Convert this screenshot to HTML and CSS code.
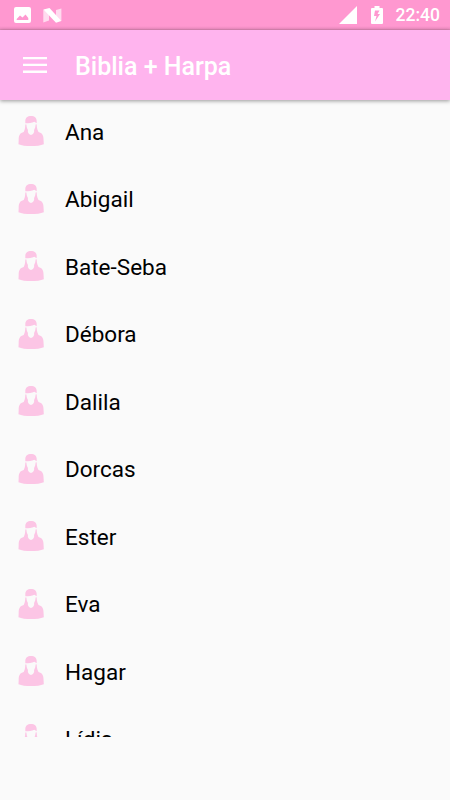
FILE: index.html
```html
<!DOCTYPE html>
<html lang="pt">
  <head>
    <meta charset="utf-8">
    <title>Biblia + Harpa</title>
    <link rel="stylesheet" href="styles.css">
  </head>
  <body>
    <svg class="defs">
      <symbol id="woman" viewBox="0 0 26 30">
        <path d="M7.300 9V5.200C7.300 1.800 9.500 0 13 0s5.700 1.800 5.700 5.200V9c0 3 .9 5.200 1.800 7 3.600.8 5 3.400 5 7l.3 5.200c-3 1.300-7.800 1.800-12.800 1.800S3.500 29.500.5 28.200L.7 23c0-3.600 1.400-6.200 5-7 .9-1.800 1.600-4 1.600-7z"/>
        <path class="face" d="M7 7.300c3.800 0 7-.3 9.300-1.500.6.700 1.500 1.100 2.700 1.400v1.100l-1.400.3c-.1 2.500-.7 4.100-1.500 5.300v2c-.5 1.400-1.500 2.600-3.100 3.100-1.600-.5-2.600-1.700-3.100-3.100v-2C9.100 12.700 8.500 11.100 8.400 8.600L7 8.400z"/>
      </symbol>
    </svg>
    <div class="status-bar">
      <svg class="status-icon" width="17" height="17" viewBox="0 0 17 17">
        <path fill="#fff" fill-rule="evenodd" d="M2 0h13a2 2 0 0 1 2 2v12a2 2 0 0 1-2 2H2a2 2 0 0 1-2-2V2a2 2 0 0 1 2-2zM2.700 13h11.600V11L11.500 7.500 8.500 10.500 6 8.500 2.700 12z"/>
      </svg>
      <svg class="status-icon nougat" width="19" height="15" viewBox="0 0 19 15">
        <path fill="#fff" fill-opacity=".65" d="M.3 1.500L6 4v8.500L.3 14.500zM18.400.5v12.500L13 10.500V2z"/>
        <path fill="#fff" d="M.5 1.500L6.500 0 18.300 13l-5.300 1.700z"/>
      </svg>
      <svg class="signal" width="18" height="18" viewBox="0 0 18 18">
        <path fill="#fff" d="M18 0v18H0z"/>
      </svg>
      <svg class="battery" width="12" height="18" viewBox="0 0 12 18">
        <path fill="#fff" fill-rule="evenodd" d="M3.500 0h5v2H11a1 1 0 0 1 1 1v14a1 1 0 0 1-1 1H1a1 1 0 0 1-1-1V3a1 1 0 0 1 1-1h2.500zM4 4.500L3 10h2.500L4 15.500 9 8H6.500L8.500 4.500z"/>
      </svg>
      <span class="clock">22:40</span>
    </div>
    <div class="toolbar">
      <svg class="menu-button" width="24" height="17" viewBox="0 0 24 17">
        <path fill="#fff" d="M0 0h24v2.300H0zM0 6.800h24v2.300H0zM0 13.600h24v2.300H0z"/>
      </svg>
      <h1>Biblia + Harpa</h1>
    </div>
    <div class="list">
      <div class="item"><svg class="avatar"><use href="#woman"/></svg>Ana</div>
      <div class="item"><svg class="avatar"><use href="#woman"/></svg>Abigail</div>
      <div class="item"><svg class="avatar"><use href="#woman"/></svg>Bate-Seba</div>
      <div class="item"><svg class="avatar"><use href="#woman"/></svg>Débora</div>
      <div class="item"><svg class="avatar"><use href="#woman"/></svg>Dalila</div>
      <div class="item"><svg class="avatar"><use href="#woman"/></svg>Dorcas</div>
      <div class="item"><svg class="avatar"><use href="#woman"/></svg>Ester</div>
      <div class="item"><svg class="avatar"><use href="#woman"/></svg>Eva</div>
      <div class="item"><svg class="avatar"><use href="#woman"/></svg>Hagar</div>
      <div class="item"><svg class="avatar"><use href="#woman"/></svg>Lídia</div>
    </div>
  </body>
</html>
```
FILE: styles.css
```css
body {
  margin: 0;
  height: 800px;
  overflow: hidden;
  display: flex;
  flex-direction: column;
  background: #fafafa;
  font-family: Roboto, "Liberation Sans", sans-serif;
}
.defs {
  display: none;
}
.status-bar {
  flex: none;
  box-sizing: border-box;
  height: 30px;
  padding: 0 10px 0 14px;
  display: flex;
  align-items: center;
  background: linear-gradient(#ff98d0 26px, #f18fc4 29px, #d883b0 30px);
  color: #fff;
}
.nougat {
  margin-left: 12px;
}
.signal {
  margin-left: auto;
}
.battery {
  margin-left: 14px;
}
.clock {
  margin-left: 13px;
  font-size: 17.5px;
  font-weight: 500;
}
.toolbar {
  flex: none;
  height: 70px;
  display: flex;
  align-items: center;
  padding-left: 23px;
  background: #ffb4ee;
  box-shadow: 0 1px 4px rgba(0, 0, 0, 0.4);
  z-index: 1;
}
.toolbar h1 {
  margin: 2px 0 0 28px;
  color: #fff;
  font-size: 25px;
  font-weight: 500;
}
.list {
  flex: none;
  height: 637px;
  overflow: hidden;
}
.item {
  height: 67.5px;
  display: flex;
  align-items: center;
  padding-left: 18px;
  color: #000;
  font-size: 22.5px;
}
.item:first-child {
  margin-top: -2px;
}
.avatar {
  width: 26px;
  height: 30px;
  margin: 0 21px 1.5px 0;
  fill: #fcc5e5;
}
.face {
  fill: #fafafa;
}
```
